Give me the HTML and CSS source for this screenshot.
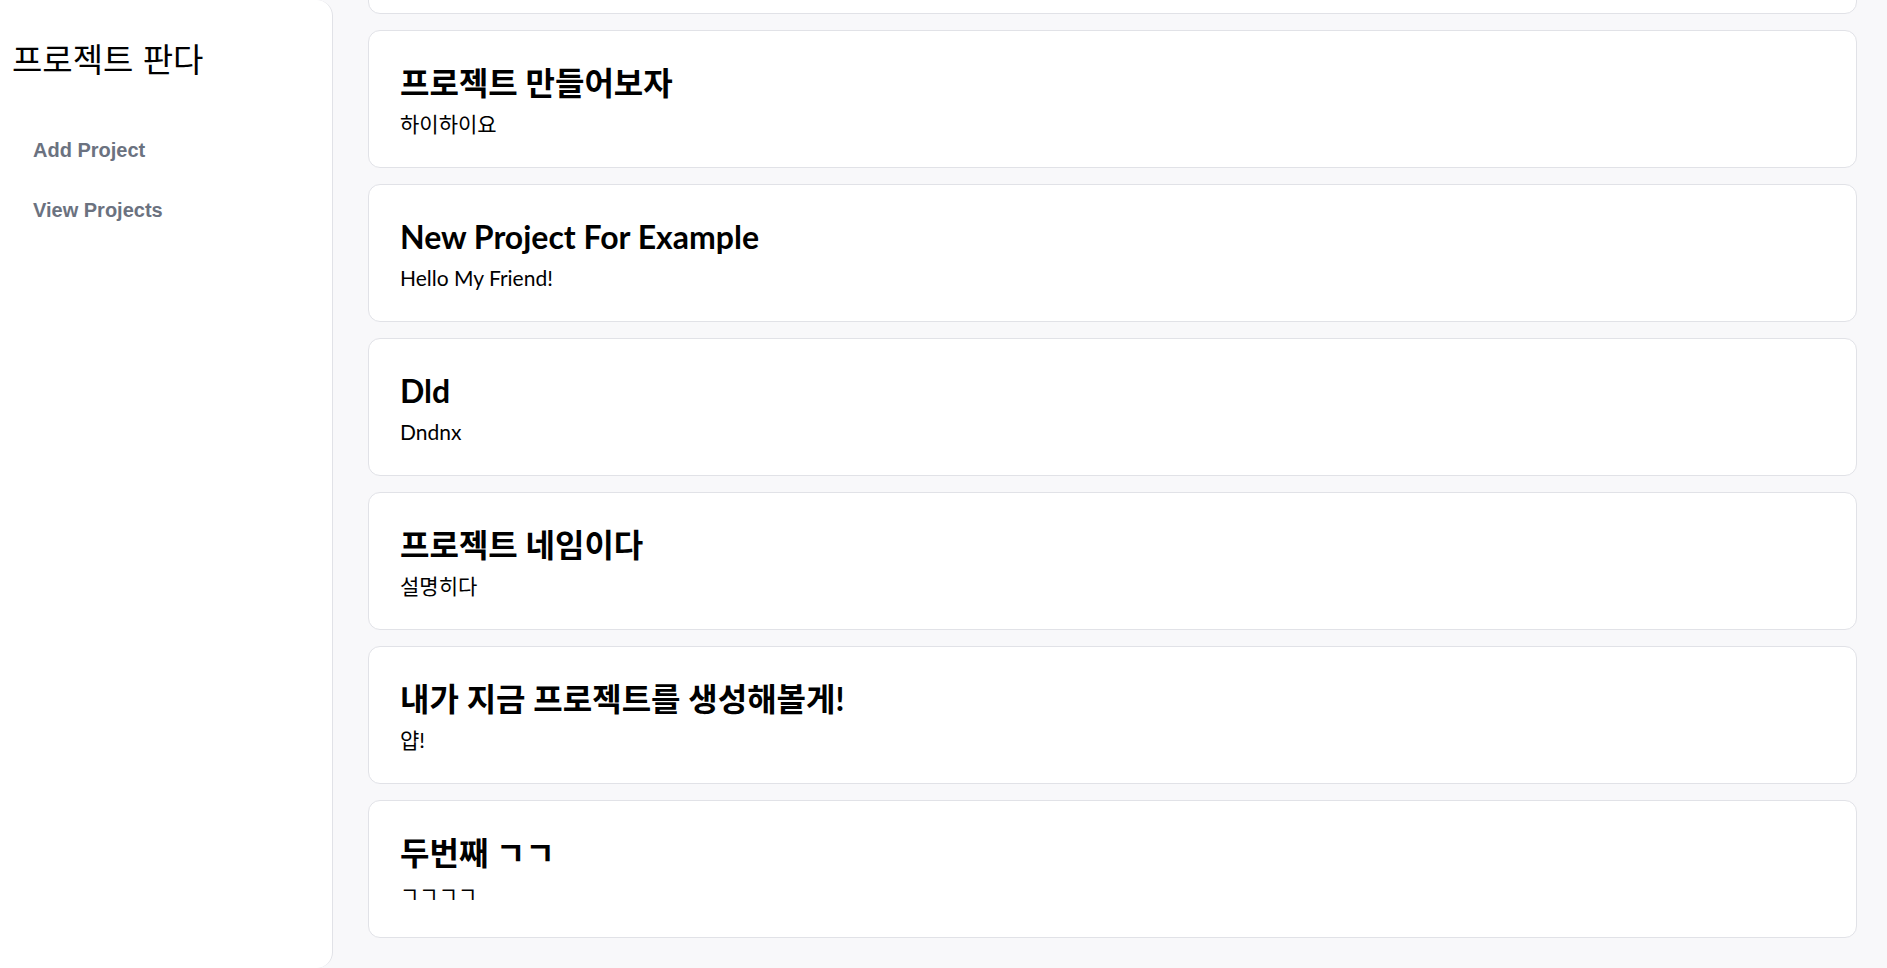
FILE: index.html
```html
<!DOCTYPE html>
<html lang="ko">
<head>
<meta charset="utf-8">
<title>프로젝트 판다</title>
<link rel="stylesheet" href="styles.css">
</head>
<body>
<div class="app">
  <aside class="sidebar">
    <h1 class="brand">프로젝트 판다</h1>
    <nav class="nav">
      <a class="nav-link" href="#">Add Project</a>
      <a class="nav-link" href="#">View Projects</a>
    </nav>
  </aside>
  <main class="main">
    <div class="list">
      <article class="card card-empty"></article>
      <article class="card">
        <h2 class="card-title">프로젝트 만들어보자</h2>
        <p class="card-desc">하이하이요</p>
      </article>
      <article class="card">
        <h2 class="card-title">New Project For Example</h2>
        <p class="card-desc">Hello My Friend!</p>
      </article>
      <article class="card">
        <h2 class="card-title">Dld</h2>
        <p class="card-desc">Dndnx</p>
      </article>
      <article class="card">
        <h2 class="card-title">프로젝트 네임이다</h2>
        <p class="card-desc">설명히다</p>
      </article>
      <article class="card">
        <h2 class="card-title">내가 지금 프로젝트를 생성해볼게!</h2>
        <p class="card-desc">얍!</p>
      </article>
      <article class="card">
        <h2 class="card-title">두번째 ㄱㄱ</h2>
        <p class="card-desc">ㄱㄱㄱㄱ</p>
      </article>
    </div>
  </main>
</div>
</body>
</html>
```
FILE: styles.css
```css
* { box-sizing: border-box; }
html, body { margin: 0; padding: 0; height: 100%; }
body {
  background: #f8f8fa;
  font-family: "Lato", "Noto Sans CJK KR", sans-serif;
  color: #000;
}
.app {
  display: flex;
  height: 100vh;
  overflow: hidden;
}
.sidebar {
  width: 333px;
  flex-shrink: 0;
  height: 100vh;
  background: #ffffff;
  border-right: 1px solid #e1e2e7;
  border-top-right-radius: 16px;
  border-bottom-right-radius: 16px;
  padding: 40px 12px 0 12px;
}
.brand {
  margin: 0;
  font-family: "Noto Sans CJK KR", sans-serif;
  font-size: 33px;
  line-height: 36px;
  font-weight: 400;
  color: #000;
}
.nav {
  display: flex;
  flex-direction: column;
  gap: 32px;
  margin-top: 60px;
  padding-left: 21px;
}
.nav-link {
  font-family: "Liberation Sans", Arial, sans-serif;
  font-weight: 700;
  font-size: 20px;
  line-height: 28px;
  color: #6b7280;
  text-decoration: none;
}
.main {
  flex: 1;
  height: 100vh;
  overflow: hidden;
  display: flex;
  flex-direction: column;
  justify-content: flex-end;
  padding: 32px 30px 30px 35px;
}
.list {
  display: flex;
  flex-direction: column;
  gap: 16px;
  flex-shrink: 0;
}
.card {
  flex-shrink: 0;
  background: #ffffff;
  border: 1px solid #e1e2e7;
  border-radius: 12px;
  padding: 34px 31px 29px 31px;
}
.card-empty {
  min-height: 138px;
}
.card-title {
  margin: 0;
  font-size: 32px;
  line-height: 36px;
  font-weight: 700;
}
.card-desc {
  margin: 9px 0 0 0;
  font-size: 21px;
  line-height: 28px;
  font-weight: 400;
}
```
